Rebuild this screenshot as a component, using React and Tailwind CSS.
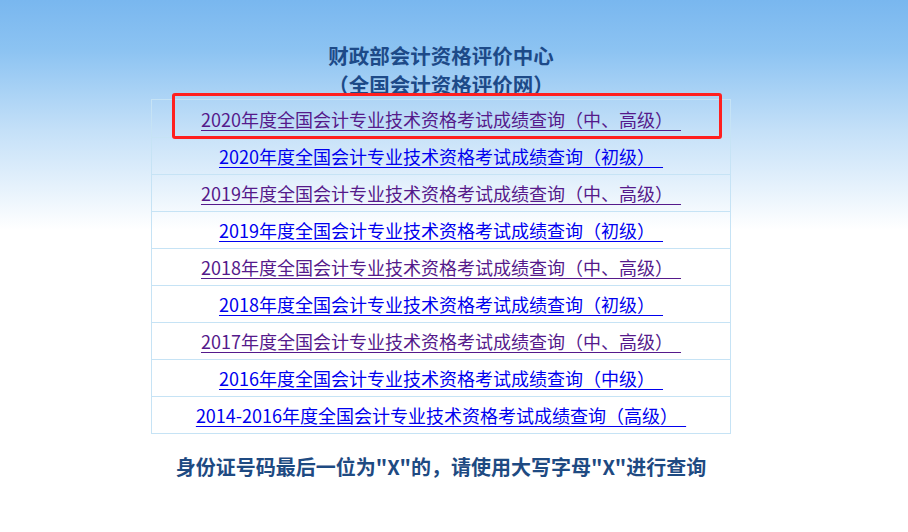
const rows = [
  { text: '2020年度全国会计专业技术资格考试成绩查询（中、高级）', visited: true },
  { text: '2020年度全国会计专业技术资格考试成绩查询（初级）', visited: false },
  { text: '2019年度全国会计专业技术资格考试成绩查询（中、高级）', visited: true },
  { text: '2019年度全国会计专业技术资格考试成绩查询（初级）', visited: false },
  { text: '2018年度全国会计专业技术资格考试成绩查询（中、高级）', visited: true },
  { text: '2018年度全国会计专业技术资格考试成绩查询（初级）', visited: false },
  { text: '2017年度全国会计专业技术资格考试成绩查询（中、高级）', visited: true },
  { text: '2016年度全国会计专业技术资格考试成绩查询（中级）', visited: false },
  { text: '2014-2016年度全国会计专业技术资格考试成绩查询（高级）', visited: false },
];

export default function App() {
  return (
    <div className="h-[532px] w-[908px] overflow-hidden bg-[linear-gradient(to_bottom,#79b7ef_0px,#8cc3f2_50px,#c4e0f8_130px,#ffffff_230px)] font-['Noto_Sans_CJK_SC','Noto_Sans',sans-serif]">
      <div className="relative ml-[151px] w-[580px] pt-[41px]">
        <div className="text-center text-[20.5px] font-bold leading-[29px] text-[#1d4a88]">
          <div>财政部会计资格评价中心</div>
          <div>（全国会计资格评价网）</div>
        </div>

        <div className="border border-[#c6e3f5]">
          {rows.map((r, i) => (
            <div
              key={i}
              className={`flex h-[37px] items-center justify-center ${i > 0 ? 'border-t border-[#c6e3f5]' : ''}`}
            >
              <a
                href="#"
                className={`text-[18px] leading-[24px] underline underline-offset-[3px] ${r.visited ? 'text-[#551a8b]' : 'text-[#0000ee]'}`}
              >
                {r.text + '\u00a0\u00a0'}
              </a>
            </div>
          ))}
        </div>

        <div className="absolute left-[21px] top-[93px] h-[46px] w-[550px] rounded-[3px] border-[3px] border-[#ff1f1f]" />

        <div className="mt-[18px] text-center text-[20px] font-bold leading-[29px] text-[#1e4a82]">
          身份证号码最后一位为"X"的，请使用大写字母"X"进行查询
        </div>
      </div>
    </div>
  );
}
